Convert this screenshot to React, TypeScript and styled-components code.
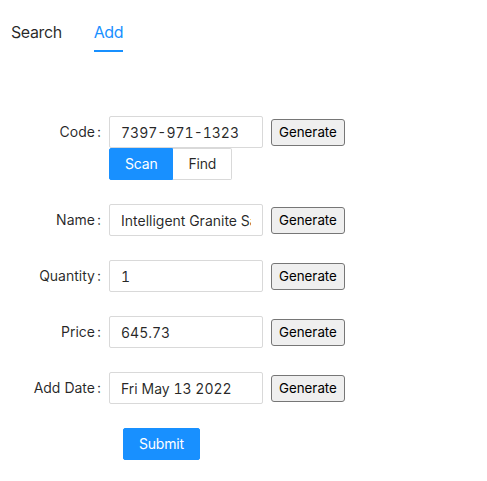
import React from "react";
import styled, { createGlobalStyle } from "styled-components";

const Global = createGlobalStyle`
  html, body { margin: 0; padding: 0; background: #fff; }
  body {
    font-family: Inter, "Noto Sans", Roboto, sans-serif;
    font-size: 14px;
    color: rgba(0,0,0,0.85);
  }
  * { box-sizing: border-box; }
`;

const Page = styled.div`
  width: 487px;
  height: 481px;
  overflow: hidden;
`;

const TabBar = styled.div`
  display: flex;
  gap: 32px;
  padding: 20px 0 0 11px;
`;

const Tab = styled.div<{ $active?: boolean }>`
  font-size: 16px;
  line-height: 25px;
  letter-spacing: -0.4px;
  padding-bottom: 5px;
  color: ${(p) => (p.$active ? "#1890ff" : "rgba(0,0,0,0.85)")};
  border-bottom: 2px solid ${(p) => (p.$active ? "#1890ff" : "transparent")};
  cursor: pointer;
`;

const Form = styled.form`
  display: flex;
  flex-direction: column;
  gap: 24px;
  padding-top: 64px;
`;

const Row = styled.div`
  display: flex;
  align-items: flex-start;
`;

const Label = styled.label`
  width: 109px;
  flex: none;
  text-align: right;
  line-height: 32px;
  height: 32px;
  white-space: nowrap;
  &::after {
    content: ":";
    margin: 0 8px 0 2px;
  }
`;

const Control = styled.div`
  display: flex;
  flex-direction: column;
`;

const Line = styled.div`
  display: flex;
  align-items: center;
`;

const Input = styled.input`
  width: 154px;
  height: 32px;
  padding: 4px 11px;
  border: 1px solid #d9d9d9;
  border-radius: 2px;
  font-family: inherit;
  font-size: 14px;
  font-variant-numeric: tabular-nums;
  color: rgba(0,0,0,0.85);
  outline: none;
  background: #fff;
`;

const NativeButton = styled.button`
  margin-left: 8px;
  height: 27px;
  padding: 1px 7px;
  background: #efefef;
  border: 1px solid #767676;
  border-radius: 3px;
  font-family: inherit;
  font-size: 13.33px;
  color: #000;
`;

const Group = styled.div`
  display: flex;
`;

const AntButton = styled.button<{ $primary?: boolean; $pos?: "left" | "right" | "solo" }>`
  height: 32px;
  padding: 4px 15px;
  font-family: inherit;
  font-size: 14px;
  line-height: 22px;
  letter-spacing: -0.2px;
  border: 1px solid ${(p) => (p.$primary ? "#1890ff" : "#d9d9d9")};
  background: ${(p) => (p.$primary ? "#1890ff" : "#fff")};
  color: ${(p) => (p.$primary ? "#fff" : "rgba(0,0,0,0.85)")};
  border-radius: ${(p) =>
    p.$pos === "left" ? "2px 0 0 2px" : p.$pos === "right" ? "0 2px 2px 0" : "2px"};
  ${(p) => (p.$pos === "right" ? "border-left: none;" : "")}
  cursor: pointer;
`;

const SubmitRow = styled.div`
  padding-left: 123px;
`;

const fields = [
  { label: "Name", value: "Intelligent Granite Sandwich" },
  { label: "Quantity", value: "1" },
  { label: "Price", value: "645.73" },
  { label: "Add Date", value: "Fri May 13 2022" },
];

export default function App() {
  return (
    <Page>
      <Global />
      <TabBar>
        <Tab>Search</Tab>
        <Tab $active>Add</Tab>
      </TabBar>
      <Form onSubmit={(e) => e.preventDefault()}>
        <Row>
          <Label>Code</Label>
          <Control>
            <Line>
              <Input defaultValue="7397-971-1323" />
              <NativeButton type="button">Generate</NativeButton>
            </Line>
            <Group>
              <AntButton type="button" $primary $pos="left">Scan</AntButton>
              <AntButton type="button" $pos="right">Find</AntButton>
            </Group>
          </Control>
        </Row>
        {fields.map((f) => (
          <Row key={f.label}>
            <Label>{f.label}</Label>
            <Control>
              <Line>
                <Input defaultValue={f.value} />
                <NativeButton type="button">Generate</NativeButton>
              </Line>
            </Control>
          </Row>
        ))}
        <SubmitRow>
          <AntButton type="submit" $primary $pos="solo">Submit</AntButton>
        </SubmitRow>
      </Form>
    </Page>
  );
}
